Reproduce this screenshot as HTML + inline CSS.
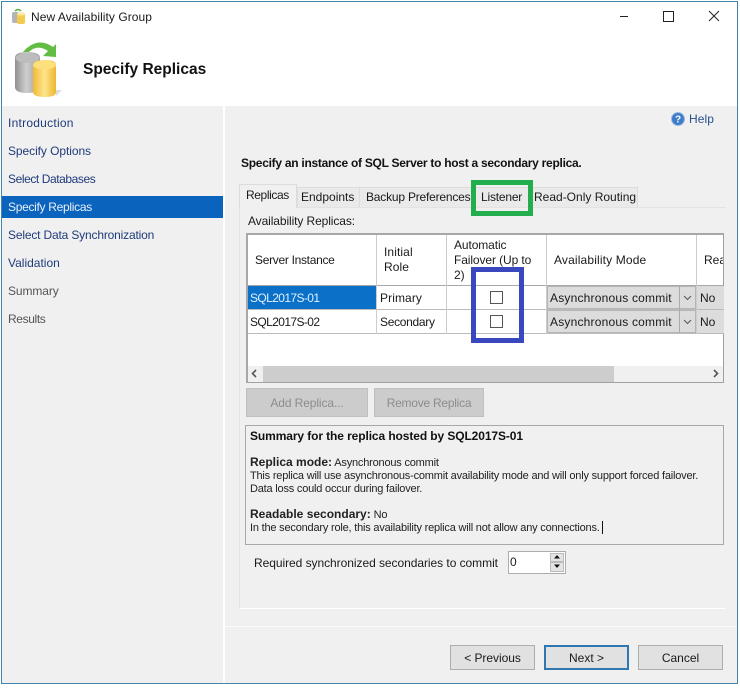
<!DOCTYPE html>
<html><head><meta charset="utf-8"><title>New Availability Group</title>
<style>
html,body{margin:0;padding:0;width:740px;height:689px;overflow:hidden;background:#fff}
body{position:relative;font-family:"Liberation Sans",sans-serif;font-size:12px;color:#1a1a1a}
.b,.t{position:absolute}
.t{white-space:nowrap;line-height:14px}
.n{color:#1f3a7a}
.s{font-size:11px;letter-spacing:-.2px;color:#222}
.cb{position:absolute;width:11px;height:11px;border:1px solid #555;background:#fff;left:490px}
.btn{position:absolute;box-sizing:border-box;background:#e1e1e1;border:1px solid #adadad;text-align:center;line-height:24px;height:26px}
</style></head><body>
<!-- window frame -->
<div class="b" style="left:1px;top:1px;width:737px;height:683px;border:1px solid #3f86ad;box-sizing:border-box;background:#fff"></div>
<div class="b" style="left:2px;top:106px;width:735px;height:577px;background:#f0f0f0"></div>
<div class="b" style="left:223px;top:106px;width:2px;height:577px;background:#fff"></div>
<!-- title icon -->
<svg class="b" style="left:10px;top:7px" width="18" height="18" viewBox="0 0 18 18">
<path d="M5 4q3-3 6 0" stroke="#5bb33c" stroke-width="1.5" fill="none"/>
<rect x="2" y="5" width="7" height="11" rx="2" fill="#b5b5b5"/>
<rect x="7" y="6" width="8" height="11" rx="2" fill="#f2cc4f"/>
<ellipse cx="11" cy="7" rx="4" ry="1.6" fill="#fbe9a0"/>
</svg>
<div class="t" style="left:31px;top:10px;letter-spacing:.05px">New Availability Group</div>
<!-- window controls -->
<div class="b" style="left:620px;top:16px;width:8px;height:1px;background:#222"></div>
<div class="b" style="left:663px;top:11px;width:9px;height:9px;border:1px solid #222"></div>
<svg class="b" style="left:708px;top:10px" width="12" height="12" viewBox="0 0 12 12"><path d="M1 1L11 11M11 1L1 11" stroke="#222" stroke-width="1" fill="none"/></svg>
<!-- header icon -->
<svg class="b" style="left:12px;top:38px" width="52" height="62" viewBox="0 0 52 62">
<defs>
<linearGradient id="gr" x1="0" x2="1" y1="0" y2="0"><stop offset="0" stop-color="#8f8f8f"/><stop offset=".45" stop-color="#cfcfcf"/><stop offset="1" stop-color="#9a9a9a"/></linearGradient>
<linearGradient id="ye" x1="0" x2="1" y1="0" y2="0"><stop offset="0" stop-color="#f0bb35"/><stop offset=".5" stop-color="#fde58b"/><stop offset="1" stop-color="#efb62e"/></linearGradient>
</defs>
<path d="M11 14Q25 -2 41 9L44 6L44 19L31 18L36 13Q24 5 15 16Z" fill="#62bd42"/>
<path d="M3 20Q3 14 15 14Q28 14 28 20V49Q28 55 15 55Q3 55 3 49Z" fill="url(#gr)"/>
<ellipse cx="15.5" cy="20" rx="12" ry="5" fill="#bdbdbd"/>
<path d="M21 27Q21 22 33 22Q44 22 44 27V54Q44 59 33 59Q21 59 21 54Z" fill="url(#ye)"/>
<ellipse cx="32.5" cy="27" rx="11.5" ry="4.5" fill="#fbe07c"/>
<path d="M44 52L50 52L44 58Z" fill="#ddd"/>
</svg>
<div class="t" style="left:83px;top:61px;font-size:15.5px;font-weight:bold;line-height:17px;color:#111">Specify Replicas</div>
<!-- nav -->
<div class="b" style="left:2px;top:196px;width:221px;height:22px;background:#0a63bd"></div>
<div class="t n" style="left:8px;top:116px;letter-spacing:.25px">Introduction</div>
<div class="t n" style="left:8px;top:144px;letter-spacing:-.07px">Specify Options</div>
<div class="t n" style="left:8px;top:172px;letter-spacing:-.42px">Select Databases</div>
<div class="t" style="left:8px;top:200px;color:#e8f0fa;letter-spacing:-.3px">Specify Replicas</div>
<div class="t n" style="left:8px;top:228px;letter-spacing:-.17px">Select Data Synchronization</div>
<div class="t n" style="left:8px;top:256px">Validation</div>
<div class="t" style="left:8px;top:284px;color:#555;letter-spacing:-.1px">Summary</div>
<div class="t" style="left:8px;top:312px;color:#555;letter-spacing:-.37px">Results</div>
<!-- help -->
<svg class="b" style="left:671px;top:112px" width="14" height="14" viewBox="0 0 14 14"><circle cx="7" cy="7" r="6.5" fill="#3d7cc9" stroke="#9dbbe0"/><text x="7" y="10.5" font-size="10" font-weight="bold" fill="#fff" text-anchor="middle" font-family="Liberation Sans">?</text></svg>
<div class="t" style="left:689px;top:112px;color:#27508f;letter-spacing:.1px">Help</div>
<div class="t" style="left:241px;top:156px;font-weight:bold;font-size:12px;color:#111;letter-spacing:-.27px">Specify an instance of SQL Server to host a secondary replica.</div>
<!-- tab page -->
<div class="b" style="left:239px;top:207px;width:487px;height:402px;border:1px solid #e3e3e3;border-right-color:#f0f0f0;border-bottom-color:#fff;box-sizing:border-box"></div>
<div class="b" style="left:239px;top:184px;width:58px;height:24px;background:#f0f0f0;border:1px solid #dcdcdc;border-bottom:0;box-sizing:border-box"></div>
<div class="b" style="left:297px;top:187px;width:341px;height:20px;background:#eaeaea;border:1px solid #dcdcdc;border-bottom:0;box-sizing:border-box"></div>
<div class="b" style="left:359px;top:187px;width:1px;height:20px;background:#dcdcdc"></div>
<div class="b" style="left:474px;top:187px;width:1px;height:20px;background:#dcdcdc"></div>
<div class="t" style="left:246px;top:188px;letter-spacing:-.4px">Replicas</div>
<div class="t" style="left:301px;top:190px">Endpoints</div>
<div class="t" style="left:366px;top:190px;letter-spacing:-.2px">Backup Preferences</div>
<div class="t" style="left:481px;top:190px;letter-spacing:-.2px">Listener</div>
<div class="t" style="left:534px;top:190px">Read-Only Routing</div>
<div class="b" style="left:471px;top:180px;width:62px;height:36px;border:5px solid #22ae4c;box-sizing:border-box"></div>
<div class="t" style="left:248px;top:214px;letter-spacing:-.1px">Availability Replicas:</div>
<!-- grid -->
<div class="b" style="left:246px;top:233px;width:478px;height:150px;background:#fff;border:1px solid #a0a0a0;border-top:2px solid #a8a8a8;border-left:2px solid #a8a8a8;box-sizing:border-box"></div>
<div class="b" style="left:248px;top:285px;width:476px;height:1px;background:#a8a8a8"></div>
<div class="b" style="left:248px;top:309px;width:476px;height:1px;background:#bbb"></div>
<div class="b" style="left:248px;top:333px;width:476px;height:1px;background:#bbb"></div>
<div class="b" style="left:376px;top:235px;width:1px;height:99px;background:#ccc"></div>
<div class="b" style="left:446px;top:235px;width:1px;height:99px;background:#ccc"></div>
<div class="b" style="left:546px;top:235px;width:1px;height:99px;background:#ccc"></div>
<div class="b" style="left:696px;top:235px;width:1px;height:99px;background:#ccc"></div>
<div class="t" style="left:255px;top:253px;letter-spacing:-.3px">Server Instance</div>
<div class="t" style="left:384px;top:245px;letter-spacing:.1px;line-height:15px">Initial<br>Role</div>
<div class="t" style="left:454px;top:238px;letter-spacing:-.1px;line-height:15px">Automatic<br>Failover (Up to<br>2)</div>
<div class="t" style="left:554px;top:253px;letter-spacing:.15px">Availability Mode</div>
<div class="b" style="left:704px;top:253px;width:19px;height:14px;overflow:hidden"><div class="t" style="left:0;top:0">Rea</div></div>
<div class="b" style="left:248px;top:286px;width:128px;height:23px;background:#0a70c8"></div>
<div class="t" style="left:250px;top:291px;color:#dff0ff;letter-spacing:-.6px">SQL2017S-01</div>
<div class="t" style="left:250px;top:315px;letter-spacing:-.6px">SQL2017S-02</div>
<div class="t" style="left:380px;top:291px;letter-spacing:.1px">Primary</div>
<div class="t" style="left:380px;top:315px;letter-spacing:-.3px">Secondary</div>
<div class="cb" style="top:291px"></div>
<div class="cb" style="top:315px"></div>
<div class="b" style="left:547px;top:286px;width:149px;height:23px;background:#dcdcdc;border:1px solid #b5b5b5;box-sizing:border-box"></div>
<div class="b" style="left:547px;top:310px;width:149px;height:23px;background:#dcdcdc;border:1px solid #b5b5b5;box-sizing:border-box"></div>
<div class="b" style="left:679px;top:286px;width:1px;height:47px;background:#aaa"></div>
<div class="t" style="left:550px;top:291px;letter-spacing:.2px">Asynchronous commit</div>
<div class="t" style="left:550px;top:315px;letter-spacing:.2px">Asynchronous commit</div>
<svg class="b" style="left:683px;top:295px" width="9" height="6"><path d="M1 1L4.500 4.500L8 1" stroke="#555" fill="none"/></svg>
<svg class="b" style="left:683px;top:319px" width="9" height="6"><path d="M1 1L4.500 4.500L8 1" stroke="#555" fill="none"/></svg>
<div class="b" style="left:697px;top:286px;width:27px;height:23px;background:#dcdcdc"></div>
<div class="b" style="left:697px;top:310px;width:27px;height:23px;background:#dcdcdc"></div>
<div class="t" style="left:700px;top:291px">No</div>
<div class="t" style="left:700px;top:315px">No</div>
<div class="b" style="left:471px;top:267px;width:53px;height:76px;border:5px solid #3a48c0;box-sizing:border-box"></div>
<!-- scrollbar -->
<div class="b" style="left:248px;top:366px;width:475px;height:16px;background:#f0f0f0"></div>
<div class="b" style="left:263px;top:366px;width:351px;height:16px;background:#cdcdcd"></div>
<svg class="b" style="left:250px;top:369px" width="9" height="9"><path d="M6 1L2.500 4.500L6 8" stroke="#555" stroke-width="1.600" fill="none"/></svg>
<svg class="b" style="left:711px;top:369px" width="9" height="9"><path d="M3 1L6.500 4.500L3 8" stroke="#555" stroke-width="1.600" fill="none"/></svg>
<!-- buttons -->
<div class="btn" style="left:246px;top:388px;width:122px;height:29px;line-height:28px;background:#ccc;border-color:#bfbfbf;color:#8c8c8c;letter-spacing:-.1px">Add Replica...</div>
<div class="btn" style="left:374px;top:388px;width:110px;height:29px;line-height:28px;background:#ccc;border-color:#bfbfbf;color:#8c8c8c;letter-spacing:-.25px">Remove Replica</div>
<!-- summary -->
<div class="b" style="left:245px;top:425px;width:479px;height:120px;border:1px solid #a8a8a8;box-sizing:border-box"></div>
<div class="t" style="left:250px;top:429px;font-weight:bold;color:#111;font-size:12px;letter-spacing:-.1px">Summary for the replica hosted by SQL2017S-01</div>
<div class="t s" style="left:250px;top:455px"><b style="font-size:12px;letter-spacing:0;color:#222">Replica mode:</b> Asynchronous commit</div>
<div class="t s" style="left:250px;top:469px">This replica will use asynchronous-commit availability mode and will only support forced failover.</div>
<div class="t s" style="left:250px;top:482px">Data loss could occur during failover.</div>
<div class="t s" style="left:250px;top:507px"><b style="font-size:12px;letter-spacing:0;color:#222">Readable secondary:</b> No</div>
<div class="t s" style="left:250px;top:521px">In the secondary role, this availability replica will not allow any connections.</div>
<div class="b" style="left:602px;top:521px;width:1px;height:13px;background:#111"></div>
<div class="t" style="left:254px;top:556px;letter-spacing:-.05px">Required synchronized secondaries to commit</div>
<div class="b" style="left:508px;top:551px;width:58px;height:23px;background:#fff;border:1px solid #adadad;box-sizing:border-box"></div>
<div class="t" style="left:510px;top:555px">0</div>
<div class="b" style="left:550px;top:553px;width:14px;height:9px;background:#e4e4e4;border:1px solid #bbb;box-sizing:border-box"></div>
<div class="b" style="left:550px;top:562px;width:14px;height:10px;background:#e4e4e4;border:1px solid #bbb;box-sizing:border-box"></div>
<svg class="b" style="left:553px;top:555px" width="8" height="16"><path d="M4 0L7 3.500H1Z M1 9.500H7L4 13Z" fill="#111"/></svg>
<!-- footer -->
<div class="b" style="left:225px;top:626px;width:512px;height:1px;background:#fbfbfb"></div>
<div class="btn" style="left:450px;top:645px;width:85px;height:25px;line-height:24px;letter-spacing:-.05px">&lt; Previous</div>
<div class="btn" style="left:544px;top:645px;width:85px;height:25px;line-height:23px;border:2px solid #2f77b0">Next &gt;</div>
<div class="btn" style="left:638px;top:645px;width:85px;height:25px;line-height:24px">Cancel</div>
</body></html>
